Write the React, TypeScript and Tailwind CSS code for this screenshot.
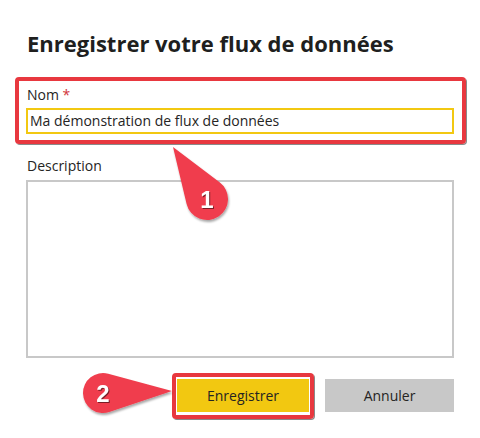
export default function App() {
  return (
    <div
      className="relative w-[480px] h-[438px] bg-white text-[#252423]"
      style={{ fontFamily: '"Open Sans", "Noto Sans", sans-serif' }}
    >
      <div className="px-[26px] pt-[28px]">
        <h1 className="ml-[1px] text-[22px] font-bold leading-[30px] text-[#201f1e]">
          Enregistrer votre flux de données
        </h1>

        {/* Nom field, highlighted */}
        <div className="relative mt-[27px]">
          <div className="pointer-events-none absolute -left-[11px] -right-[12px] -top-[8px] -bottom-[10px] rounded-[4px] border-4 border-[#e8383f] shadow-[1px_1px_0_#8a8a8a]" />
          <label className="ml-[1px] block text-[14px] leading-[20px]">
            Nom <span className="text-[#d13438]">*</span>
          </label>
          <div className="mt-[3px] h-[26px] border-2 border-[#f2c811] px-[2px] text-[14px] leading-[22px]">
            Ma démonstration de flux de données
          </div>
        </div>

        <label className="mt-[22px] ml-[1px] block text-[14px] leading-[20px]">Description</label>
        <div className="mt-[4px] h-[178px] border-2 border-[#c8c8c8]" />

        <div className="mt-[21px] flex justify-end gap-[16px]">
          <div className="relative">
            <div className="pointer-events-none absolute -left-[5px] -right-[5px] -top-[6px] -bottom-[7px] rounded-[4px] border-4 border-[#e8383f] shadow-[1px_1px_0_#8a8a8a]" />
            <button className="flex h-[33px] w-[132px] items-center justify-center bg-[#f2c811] text-[14px] text-[#252423]">
              Enregistrer
            </button>
          </div>
          <button className="flex h-[33px] w-[129px] items-center justify-center bg-[#c8c8c8] text-[14px] text-[#252423]">
            Annuler
          </button>
        </div>
      </div>

      {/* Callouts */}
      <svg className="pointer-events-none absolute left-0 top-0" width="480" height="438">
        <defs>
          <filter id="sh" x="-20%" y="-20%" width="140%" height="140%">
            <feDropShadow dx="1" dy="2" stdDeviation="1" floodColor="#000" floodOpacity="0.35" />
          </filter>
        </defs>
        <g filter="url(#sh)" fill="#f03e4d">
          <path d="M173 147 L219.6 182.2 A21 21 0 1 1 186.6 203.9 Z" />
          <path d="M172 391 L109.3 412 A20 20 0 1 1 108.2 373.7 Z" />
        </g>
        <g
          fill="#fff"
          fontFamily="'Liberation Sans', Arial, sans-serif"
          fontWeight="bold"
          fontSize="24"
          textAnchor="middle"
          style={{ filter: "drop-shadow(1px 1px 0 rgba(0,0,0,0.5))" }}
        >
          <text x="207" y="208">1</text>
          <text x="103" y="402">2</text>
        </g>
      </svg>
    </div>
  );
}
